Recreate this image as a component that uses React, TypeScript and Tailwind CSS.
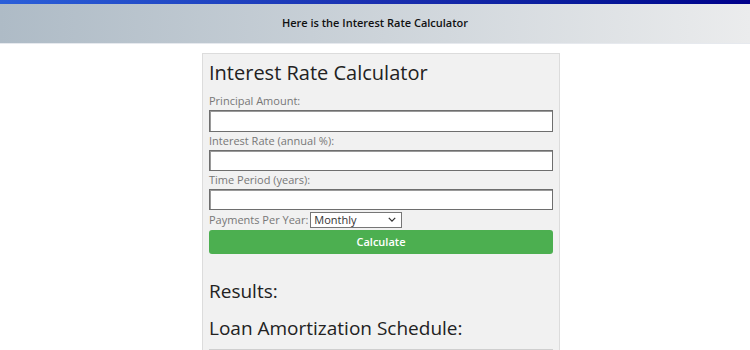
import { useState } from "react";

const columns = ["Payment", "Date", "Principal", "Interest", "Total", "Balance"];

function Field({ label, height }: { label: string; height: string }) {
  return (
    <div>
      <label className="block h-[16px] text-[11px] leading-[16px] text-[#777]">{label}</label>
      <input
        type="text"
        className={`mt-[1px] block w-full border border-[#6e6e6e] bg-white shadow-[inset_1px_1px_0_#9a9a9a] ${height}`}
      />
    </div>
  );
}

export default function App() {
  const [freq, setFreq] = useState("12");

  return (
    <div className="min-h-[350px] bg-white font-['Open_Sans',sans-serif] text-[#333]">
      <div className="h-[4px] bg-gradient-to-r from-[#2b5fd9] via-[#1a2fb0] to-[#00008b]" />
      <header className="flex h-[40px] items-center justify-center border-b border-[#e6e9ee] bg-gradient-to-r from-[#aebbc6] to-[#ebeced]">
        <p className="text-[11px] font-semibold text-[#111]">Here is the Interest Rate Calculator</p>
      </header>

      <div className="pl-[12px]">
        <div className="mx-auto mt-[9px] w-[358px] border border-[#dcdcdc] bg-[#f1f1f1] px-[6px] pt-[4px]">
          <h1 className="h-[30px] text-[20px] leading-[30px] text-[#222]">Interest Rate Calculator</h1>

          <div className="mt-[5px] flex flex-col gap-[1px]">
            <Field label="Principal Amount:" height="h-[22px]" />
            <Field label="Interest Rate (annual %):" height="h-[21px]" />
            <Field label="Time Period (years):" height="h-[21px]" />
          </div>

          <div className="mt-[2px] flex h-[16px] items-center gap-[2px] text-[11px] text-[#777]">
            <span>Payments Per Year:</span>
            <div className="relative h-[16px] w-[92px]">
              <select
                value={freq}
                onChange={(e) => setFreq(e.target.value)}
                className="h-[16px] w-full appearance-none border border-[#767676] bg-white px-[3px] py-0 text-[11px] leading-[14px] text-[#333]"
              >
                <option value="12">Monthly</option>
                <option value="4">Quarterly</option>
                <option value="1">Annually</option>
              </select>
              <svg
                viewBox="0 0 10 6"
                className="pointer-events-none absolute right-[6px] top-[5px] h-[5px] w-[8px]"
              >
                <path d="M1 1l4 4 4-4" fill="none" stroke="#333" strokeWidth="1.6" />
              </svg>
            </div>
          </div>

          <button className="mt-[2px] block h-[24px] w-full rounded-[3px] bg-[#4caf50] text-[11px] font-semibold text-white">
            Calculate
          </button>

          <h2 className="mt-[25px] h-[24px] text-[19px] leading-[24px] text-[#222]">Results:</h2>
          <h2 className="mt-[13px] h-[24px] text-[19px] leading-[24px] text-[#222]">Loan Amortization Schedule:</h2>

          <table className="mt-[9px] w-full border-collapse">
            <tbody>
              {[0, 1].map((r) => (
                <tr key={r}>
                  {columns.map((c) => (
                    <td key={c} className="h-[22px] border border-[#cfcfcf]" />
                  ))}
                </tr>
              ))}
            </tbody>
          </table>
        </div>
      </div>
    </div>
  );
}
